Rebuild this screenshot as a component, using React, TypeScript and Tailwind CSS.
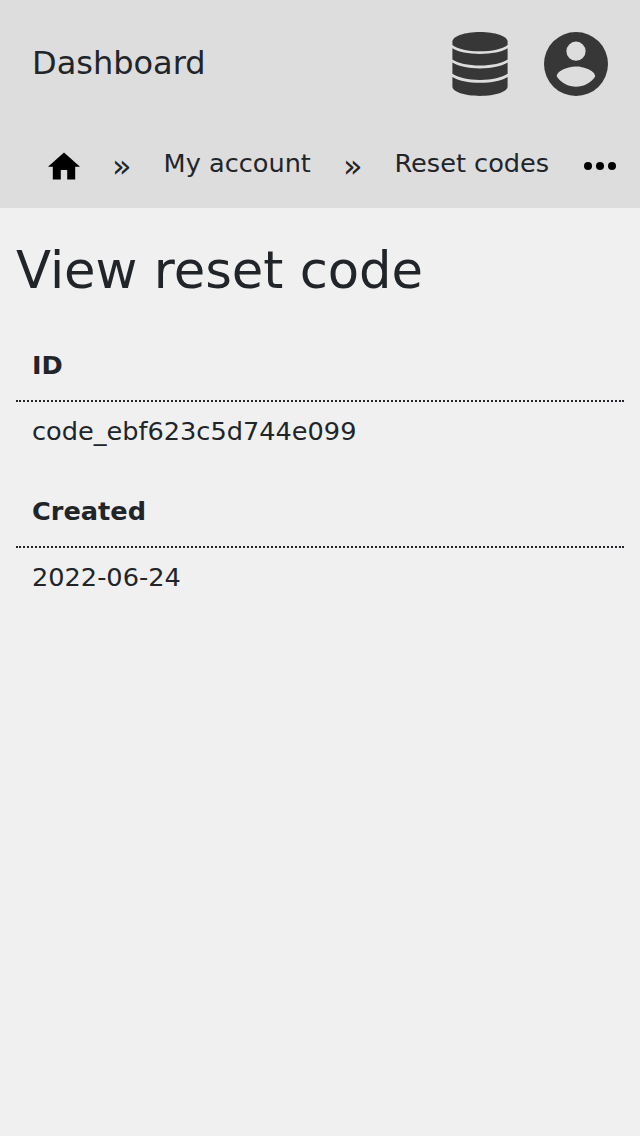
const fields = [
  { label: "ID", value: "code_ebf623c5d744e099" },
  { label: "Created", value: "2022-06-24" },
];

function DatabaseIcon() {
  return (
    <svg className="h-16 w-16" viewBox="0 0 64 64" fill="currentColor">
      <path d="M32 0C47.2 0 59.6 4.2 59.6 9.6V13C54.5 17.1 43.500 19.300 32 19.300S9.500 17.100 4.400 13V9.600C4.400 4.200 16.800 0 32 0Z" />
      <path d="M4.400 16.300C10 20 20.500 21.900 32 21.900S54 20 59.600 16.300V27.500C54.500 31.300 43.500 33.500 32 33.500S9.500 31.300 4.400 27.500Z" />
      <path d="M4.400 30.600C10 34.300 20.500 36.400 32 36.400S54 34.300 59.600 30.600V41.800C54.500 45.600 43.500 47.900 32 47.900S9.500 45.600 4.400 41.800Z" />
      <path d="M4.400 44.900C10 48.700 20.500 50.700 32 50.700S54 48.700 59.600 44.900V54.600C59.600 59.800 47.200 64 32 64S4.400 59.800 4.400 54.600Z" />
    </svg>
  );
}

function AccountIcon() {
  return (
    <svg className="h-16 w-16" viewBox="0 0 64 64" fill="currentColor">
      <path
        fillRule="evenodd"
        d="M32 0a32 32 0 1 1 0 64a32 32 0 0 1 0-64ZM32 9.600a9.600 9.600 0 1 0 0 19.200a9.600 9.600 0 0 0 0-19.200ZM12.800 44.500a23.050 23.050 0 0 0 38.400 0C51.100 38.100 38.400 34.600 32 34.600S12.900 38.100 12.800 44.500Z"
      />
    </svg>
  );
}

export default function App() {
  return (
    <div className="min-h-screen bg-[#f0f0f0] font-['DejaVu_Sans',sans-serif] text-[#212529]">
      <header className="h-[208px] bg-[#ddd]">
        <div className="flex h-32 items-center justify-between px-8">
          <a className="pb-0.5 text-[32px] leading-[48px]">Dashboard</a>
          <div className="flex items-center gap-8 text-[#373737]">
            <DatabaseIcon />
            <AccountIcon />
          </div>
        </div>
        <nav className="flex h-20 items-start gap-8 pl-12 text-[25.6px] leading-[38px] whitespace-nowrap">
          <svg className="mt-[22px] h-8 w-8 shrink-0 text-black" viewBox="0 0 32 32" fill="currentColor">
            <path d="M16 2.400 0 16.800h4.800v12.800h8V20h6.400v9.600h8V16.800H32Z" />
          </svg>
          <span className="mt-[19px] text-[32px]">»</span>
          <span className="mt-4">My account</span>
          <span className="mt-[19px] text-[32px]">»</span>
          <span className="mt-4">Reset codes</span>
          <svg className="mt-[22px] ml-[3px] h-8 w-8 shrink-0 text-black" viewBox="0 0 32 32" fill="currentColor">
            <circle cx="4" cy="16" r="4" />
            <circle cx="16" cy="16" r="4" />
            <circle cx="28" cy="16" r="4" />
          </svg>
        </nav>
      </header>
      <main className="px-4 pt-8">
        <h1 className="text-[51.2px] leading-[61px]">View reset code</h1>
        <dl className="mt-[33px] text-[25.6px] leading-[38px]">
          {fields.map((f) => (
            <div key={f.label} className="mb-[30px]">
              <dt className="border-b-2 border-dotted border-[#212529] px-4 pt-3 pb-4 font-bold">{f.label}</dt>
              <dd className="px-4 pt-2.5">{f.value}</dd>
            </div>
          ))}
        </dl>
      </main>
    </div>
  );
}
